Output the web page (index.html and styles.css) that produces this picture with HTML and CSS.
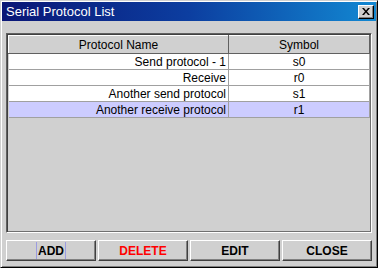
FILE: index.html
```html
<!DOCTYPE html>
<html lang="en">
<head>
  <meta charset="UTF-8" />
  <title>Serial Protocol List</title>
  <link rel="stylesheet" href="styles.css">
</head>
<body>
  <div class="window">
    <div class="titlebar">
      <span class="title">Serial Protocol List</span>
      <button class="close-x" type="button">
        <svg width="8" height="7" viewBox="0 0 8 7">
          <path d="M0 0h2l2 2.5L6 0h2L5 3.5 8 7H6L4 4.5 2 7H0l3-3.5z" fill="#000"/>
        </svg>
      </button>
    </div>

    <div class="panel">
      <table class="grid">
        <thead>
          <tr>
            <th class="col-name">Protocol Name</th>
            <th class="col-sym">Symbol</th>
          </tr>
        </thead>
        <tbody>
          <tr><td class="name">Send protocol - 1</td><td class="sym">s0</td></tr>
          <tr><td class="name">Receive</td><td class="sym">r0</td></tr>
          <tr><td class="name">Another send protocol</td><td class="sym">s1</td></tr>
          <tr class="selected"><td class="name">Another receive protocol</td><td class="sym">r1</td></tr>
        </tbody>
      </table>
    </div>

    <div class="buttons">
      <button class="btn" type="button"><span class="focus">ADD</span></button>
      <button class="btn danger" type="button">DELETE</button>
      <button class="btn" type="button">EDIT</button>
      <button class="btn" type="button">CLOSE</button>
    </div>
  </div>
</body>
</html>
```

FILE: styles.css
```css
* {
  box-sizing: border-box;
}

html, body {
  margin: 0;
  padding: 0;
  background: #d0d0d0;
  font-family: 'Liberation Sans', Arial, sans-serif;
}

.window {
  width: 378px;
  height: 268px;
  display: flex;
  flex-direction: column;
  background: #d0d0d0;
  border: 1px solid;
  border-color: #d0d0d0 #000 #000 #d0d0d0;
  box-shadow: inset 1px 1px #fff, inset -1px -1px #808080;
  padding: 1px 1px 1px 1px;
}

.titlebar {
  height: 19px;
  display: flex;
  align-items: center;
  justify-content: space-between;
  padding: 0 2px 0 4px;
  background: linear-gradient(to right, #0a1676 0%, #0c3ea0 50%, #1288d2 100%);
}

.title {
  color: #fff;
  font-size: 13px;
  line-height: 1;
}

.close-x {
  width: 16px;
  height: 14px;
  padding: 0;
  display: flex;
  align-items: center;
  justify-content: center;
  background: #d0d0d0;
  border: 1px solid;
  border-color: #fff #000 #000 #fff;
  box-shadow: inset -1px -1px #808080;
}

.panel {
  height: 200px;
  margin: 12px 4px 0 4px;
  background: #d0d0d0;
  border: 1px solid;
  border-color: #606060 #fff #fff #606060;
  box-shadow: inset 1px 1px #404040, inset -1px -1px #707070;
  padding: 1px;
}

.grid {
  width: 100%;
  border-collapse: collapse;
  font-size: 12px;
  color: #000;
}

.grid th {
  height: 18px;
  padding: 0;
  font-weight: normal;
  text-align: center;
  background: #d0d0d0;
  border: 1px solid;
  border-color: #fff #606060 #606060 #fff;
}

.col-name {
  width: 220px;
}

.grid td {
  height: 16px;
  padding: 0 2px;
  background: #fff;
  border-bottom: 1px solid #a0a0a0;
  border-right: 1px solid #a0a0a0;
  line-height: 14px;
}

.grid td.name {
  text-align: right;
}

.grid td.sym {
  text-align: center;
}

.grid tr.selected td {
  background: #ccccff;
}

.buttons {
  display: grid;
  grid-template-columns: repeat(4, 1fr);
  gap: 2px;
  margin: 7px 4px 0 4px;
}

.btn {
  height: 21px;
  padding: 0;
  display: flex;
  align-items: center;
  justify-content: center;
  font-family: 'Liberation Sans', Arial, sans-serif;
  font-size: 12px;
  font-weight: bold;
  color: #000;
  background: #d0d0d0;
  border: 1px solid;
  border-color: #fff #404040 #404040 #fff;
  box-shadow: inset -1px -1px #808080;
}

.btn.danger {
  color: #ff0000;
}

.focus {
  align-self: stretch;
  display: flex;
  align-items: center;
  padding: 0 1px;
  margin: 1px 0;
  border-left: 1px solid #9c9ce0;
  border-right: 1px solid #9c9ce0;
}
```
